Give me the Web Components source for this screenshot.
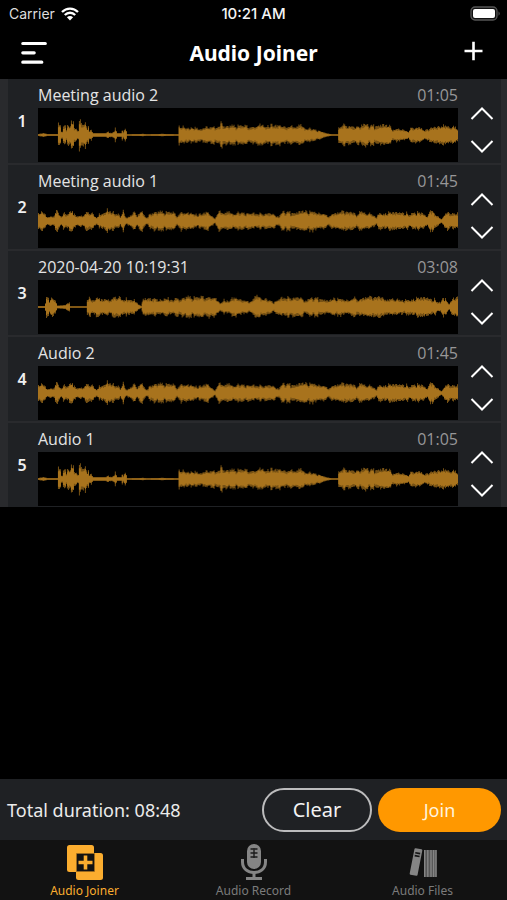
<!DOCTYPE html>
<html lang="en">
<head>
<meta charset="utf-8">
<meta name="viewport" content="width=device-width, initial-scale=1">
<title>Audio Joiner</title>
<style>
  html, body { margin: 0; background: #000; }
  body { font-family: "Noto Sans", "Open Sans", sans-serif; color: #f0f0f0; }
</style>
</head>
<body>
<audio-joiner-app></audio-joiner-app>

<script>
class StatusBar extends HTMLElement {
  connectedCallback() {
    this.attachShadow({ mode: 'open' }).innerHTML = `
      <style>
        :host { display: grid; grid-template-columns: 1fr auto 1fr; align-items: center; height: 27px; padding: 0 6px; font: 14px/16px Inter, "Liberation Sans", sans-serif; }
        .left { display: flex; align-items: center; gap: 6px; padding-left: 3px; color: #ddd; }
        .time { font-size: 15px; font-weight: 500; color: #f4f4f4; }
        .battery { justify-self: end; }
        svg { display: block; }
      </style>
      <div class="left"><span>Carrier</span>
        <svg width="18" height="14" viewBox="0 0 18 14" fill="none" stroke="#fff" stroke-width="2.3" aria-hidden="true">
          <path d="M1 5C5.500 .4 12.500 .4 17 5M3.800 8C6.800 5 11.200 5 14.200 8"/>
          <path d="M5.900 10.300Q9 7.500 12.100 10.300L9 13.600Z" fill="#fff" stroke="none"/>
        </svg>
      </div>
      <span class="time">10:21 AM</span>
      <svg class="battery" width="31" height="15" viewBox="0 0 31 15" aria-hidden="true">
        <rect x="1" y="1" width="26" height="13" rx="4" fill="#111" stroke="#555" stroke-width="1.300"/>
        <rect x="3" y="3" width="22" height="9" rx="2" fill="#fff"/>
        <path d="M28.500 5.200Q31 7.500 28.500 9.800Z" fill="#555"/>
      </svg>`;
  }
}
customElements.define('status-bar', StatusBar);

class TitleBar extends HTMLElement {
  connectedCallback() {
    this.attachShadow({ mode: 'open' }).innerHTML = `
      <style>
        :host { display: grid; grid-template-columns: 1fr auto 1fr; align-items: center; height: 52px; padding: 0 21px; }
        h1 { margin: 0; font-size: 21px; line-height: 28px; font-weight: 700; color: #fff; }
        button { border: 0; background: none; padding: 0; color: #fff; }
        button:first-of-type { justify-self: start; }
        .add { justify-self: end; padding-bottom: 4px; }
        svg { display: block; }
      </style>
      <button aria-label="Menu"><svg width="27" height="24" viewBox="0 0 27 24" stroke="#fff" stroke-width="3.200" stroke-linecap="round"><path d="M1.800 2.500H24.300M1.800 11.800H13.200M1.800 21.200H20.800"/></svg></button>
      <h1><slot></slot></h1>
      <button class="add" aria-label="Add"><svg width="25" height="20" viewBox="0 0 25 20" stroke="#fff" stroke-width="2.600"><path d="M3.500 10H21.500M12.500 .8V19.200"/></svg></button>`;
  }
}
customElements.define('title-bar', TitleBar);

/* Envelopes: [x, half height] pairs on a 421 wide canvas. */
const ENVELOPES = {
  a: [[0,1],[5,2],[9,1],[19,1],[20,11],[22,10],[23,4],[24,4],[25,10],[27,10],[28,5],[29,10],[33,13],[35,13],[36,7],[38,5],[40,5],[41,13],[47,12],[48,8],[49,6],[50,9],[51,5],[53,6],[55,2],[67,2],[70,3],[73,2],[76,3],[77,7],[79,2],[83,2],[84,6],[85,3],[87,7],[88,5],[89,.7],[105,1.2],[108,.7],[124,1.2],[140,.7],[141,10],[145,9],[155,7],[166,8],[177,8],[183,12],[188,9],[200,9],[215,8],[225,10],[250,9],[263,9],[272,7],[280,5],[288,2],[294,.7],[300,.7],[301,9],[308,10],[318,8],[326,10],[336,9],[347,10],[353,9],[356,5],[360,7],[367,6],[371,3],[375,9],[383,8],[387,4],[394,7],[402,8],[410,9],[418,9],[420,6]],
  b: [[0,9],[4,9],[9,4],[15,4],[17,9],[19,9],[22,4],[25,7],[30,8],[34,10],[39,5],[44,6],[48,9],[53,8],[58,4],[62,7],[66,9],[68,12],[72,9],[79,8],[82,4],[85,10],[87,4],[91,4],[96,10],[99,4],[102,9],[105,9],[108,4],[110,5],[114,9],[123,9],[135,8],[139,5],[143,9],[151,7],[155,9],[160,6],[169,9],[173,6],[177,3],[181,10],[190,8],[200,9],[211,8],[218,7],[233,8],[241,4],[245,9],[258,8],[265,10],[278,10],[286,8],[290,4],[293,8],[305,9],[316,8],[319,5],[323,9],[333,8],[339,4],[342,9],[361,8],[365,9],[374,7],[382,9],[390,5],[394,11],[398,8],[404,2],[410,9],[414,7],[420,9]],
  c: [[0,1],[6,1],[8,9],[11,7],[13,12],[17,7],[19,1.5],[27,2],[31,5],[32,.7],[48,.7],[49,10],[54,8],[60,9],[70,8],[77,10],[87,8],[95,8],[100,3],[103,1],[105,9],[110,8],[115,9],[124,8],[132,9],[140,8],[149,10],[159,9],[170,10],[176,9],[182,4],[186,8],[190,5],[194,9],[205,8],[211,5],[216,9],[222,11],[227,9],[236,5],[241,8],[246,9],[262,10],[268,6],[275,9],[284,8],[290,6],[297,9],[311,8],[319,9],[330,10],[336,9],[342,10],[350,6],[355,9],[367,7],[374,9],[390,9],[397,8],[403,4],[406,10],[412,3],[416,10],[420,9]]
};

class AudioWave extends HTMLElement {
  connectedCallback() {
    const points = ENVELOPES[this.getAttribute('shape')];
    const level = x => {
      const i = Math.max(1, points.findIndex(p => p[0] >= x));
      const [x0, y0] = points[i - 1], [x1, y1] = points[i];
      return y0 + (y1 - y0) * (x - x0) / (x1 - x0);
    };
    let seed = 71, peaks = '', core = '', left = 0, gain = 1;
    const random = () => (seed = seed * 16807 % 2147483647) / 2147483647;
    for (let x = 0; x < 421; x++) {
      if (left-- <= 0) { left = Math.floor(random() * 3); gain = .74 + random() * .4; }
      const h = level(x), quiet = h < 2.5;
      const top = quiet ? h : h * gain * (.85 + random() * .28);
      const bottom = quiet ? h : h * gain * (.85 + random() * .28);
      const inner = quiet ? h * .6 : h * gain * (.66 + random() * .2);
      peaks += `M${x} ${(27 - top).toFixed(1)}h1V${(27 + bottom).toFixed(1)}h-1z`;
      core += `M${x} ${(27 - inner).toFixed(1)}h1V${(27 + inner).toFixed(1)}h-1z`;
    }
    this.attachShadow({ mode: 'open' }).innerHTML = `
      <style>
        :host { display: block; height: 54px; background: #000; }
        svg { display: block; width: 100%; height: 100%; }
      </style>
      <svg viewBox="0 0 421 54" preserveAspectRatio="none" fill="#a8731d" aria-hidden="true">
        <path d="${peaks}" opacity=".7"/><path d="${core}"/>
      </svg>`;
  }
}
customElements.define('audio-wave', AudioWave);

class AudioTrack extends HTMLElement {
  connectedCallback() {
    const a = n => this.getAttribute(n);
    this.attachShadow({ mode: 'open' }).innerHTML = `
      <style>
        :host { display: grid; grid-template-columns: 30px 1fr 43px; box-sizing: border-box; height: 84px; background: #1f2124; }
        .number { justify-self: center; padding: 30px 2px 0 0; font-size: 16px; line-height: 24px; font-weight: 600; color: #f0f0f0; }
        .heading { display: flex; justify-content: space-between; height: 29px; font: 16px/32px "Open Sans", "Noto Sans", sans-serif; }
        .name { color: #e4e4e4; }
        .time { color: #979798; }
        .moves { display: flex; flex-direction: column; align-items: center; gap: 12px; padding: 23px 0 0 5px; }
        button { border: 0; background: none; padding: 4px 0; }
        svg { display: block; }
      </style>
      <span class="number">${a('number')}</span>
      <div>
        <div class="heading"><span class="name">${a('name')}</span><span class="time">${a('time')}</span></div>
        <audio-wave shape="${a('shape')}"></audio-wave>
      </div>
      <div class="moves">
        <button aria-label="Move up"><svg width="24" height="14" viewBox="0 0 24 14" fill="none" stroke="#fff" stroke-width="2"><path d="M1.500 13L12 2.500L22.500 13"/></svg></button>
        <button aria-label="Move down"><svg width="24" height="14" viewBox="0 0 24 14" fill="none" stroke="#fff" stroke-width="2"><path d="M1.500 1L12 11.500L22.500 1"/></svg></button>
      </div>`;
  }
}
customElements.define('audio-track', AudioTrack);

class JoinBar extends HTMLElement {
  connectedCallback() {
    this.attachShadow({ mode: 'open' }).innerHTML = `
      <style>
        :host { display: flex; align-items: center; gap: 6px; height: 61px; padding: 0 6px 0 7px; background: #1f2124; }
        .total { flex: 1; font-size: 18px; line-height: 26px; color: #ebebeb; }
        button { box-sizing: border-box; height: 44px; border-radius: 22px; font-family: inherit; padding: 0; }
        .clear { width: 110px; border: 2px solid #bcbcbd; background: #1f2124; color: #f3f3f3; font-size: 20px; }
        .join { width: 123px; border: 0; background: #ff9800; color: #fff4df; font-size: 18px; }
      </style>
      <span class="total"><slot></slot></span>
      <button class="clear">Clear</button>
      <button class="join">Join</button>`;
  }
}
customElements.define('join-bar', JoinBar);

class TabItem extends HTMLElement {
  connectedCallback() {
    this.attachShadow({ mode: 'open' }).innerHTML = `
      <style>
        :host { display: block; flex: 1; color: #7b7b7b; }
        :host([active]) { color: #fbad2f; }
        a { display: flex; flex-direction: column; align-items: center; gap: 2px; padding-top: 4px; color: inherit; text-decoration: none; font-size: 12px; line-height: 17px; }
      </style>
      <a href="#"><slot name="icon"></slot><span><slot></slot></span></a>`;
  }
}
customElements.define('tab-item', TabItem);

class AudioJoinerApp extends HTMLElement {
  connectedCallback() {
    this.attachShadow({ mode: 'open' }).innerHTML = `
      <style>
        :host { display: flex; flex-direction: column; min-height: 100vh; background: #000; }
        .tracks { display: flex; flex-direction: column; gap: 2px; padding: 0 6px 0 8px; background: #292a2d; }
        main { flex: 1; }
        nav { display: flex; height: 60px; background: #121212; }
        nav svg { display: block; }
      </style>
      <status-bar></status-bar>
      <title-bar>Audio Joiner</title-bar>
      <main>
        <div class="tracks">
          <audio-track number="1" name="Meeting audio 2" time="01:05" shape="a"></audio-track>
          <audio-track number="2" name="Meeting audio 1" time="01:45" shape="b"></audio-track>
          <audio-track number="3" name="2020-04-20 10:19:31" time="03:08" shape="c"></audio-track>
          <audio-track number="4" name="Audio 2" time="01:45" shape="b"></audio-track>
          <audio-track number="5" name="Audio 1" time="01:05" shape="a"></audio-track>
        </div>
      </main>
      <join-bar>Total duration: 08:48</join-bar>
      <nav>
        <tab-item active>
          <svg slot="icon" width="38" height="36" viewBox="0 0 38 36" aria-hidden="true">
            <rect x="1" y="1" width="27" height="27" rx="2.500" fill="#fbad2f"/>
            <rect x="10" y="9" width="27" height="27" rx="2.500" fill="#fbad2f"/>
            <path d="M28.500 1V9M1 28.500H10" stroke="#121212"/>
            <path d="M10.500 9.500H28.500V27.500H10.500Z" fill="#121212" stroke="#a46f20" stroke-width=".6"/>
            <path d="M12.500 18.500H26.500M19.500 11.500V25.500" stroke="#fbad2f" stroke-width="3.600"/>
          </svg>Audio Joiner</tab-item>
        <tab-item>
          <svg slot="icon" width="28" height="36" viewBox="0 0 28 36" fill="none" stroke="#858585" aria-hidden="true">
            <rect x="7" y="0" width="14" height="25" rx="7" fill="#858585" stroke="none"/>
            <path d="M2.500 15V18C2.500 25 8 28.500 14 28.500S25.500 25 25.500 18V15" stroke-width="3"/>
            <path d="M14 28V34M6 34.500H22" stroke-width="3"/>
            <path d="M10.500 5H13.200M14.800 5H17.500M10.500 9H17.500M10.500 13H17.500M14 4V14" stroke="#1b1b1b" stroke-width="1.400"/>
          </svg>Audio Record</tab-item>
        <tab-item>
          <svg slot="icon" width="28" height="36" viewBox="0 0 28 36" aria-hidden="true">
            <g transform="rotate(11 7 18)">
              <rect x="3" y="4.500" width="8" height="27" rx="1" fill="#858585"/>
              <path d="M4.500 9H9.500M4.500 12H9.500" stroke="#151515" stroke-width="1.600"/>
            </g>
            <rect x="15" y="6" width="12.500" height="27" fill="#555"/>
            <path d="M15.700 6V33M18.800 6V33M22 6V33M24.600 6V33M27 6V33" stroke="#858585" stroke-width="1.400"/>
          </svg>Audio Files</tab-item>
      </nav>`;
  }
}
customElements.define('audio-joiner-app', AudioJoinerApp);
</script>
</body>
</html>
